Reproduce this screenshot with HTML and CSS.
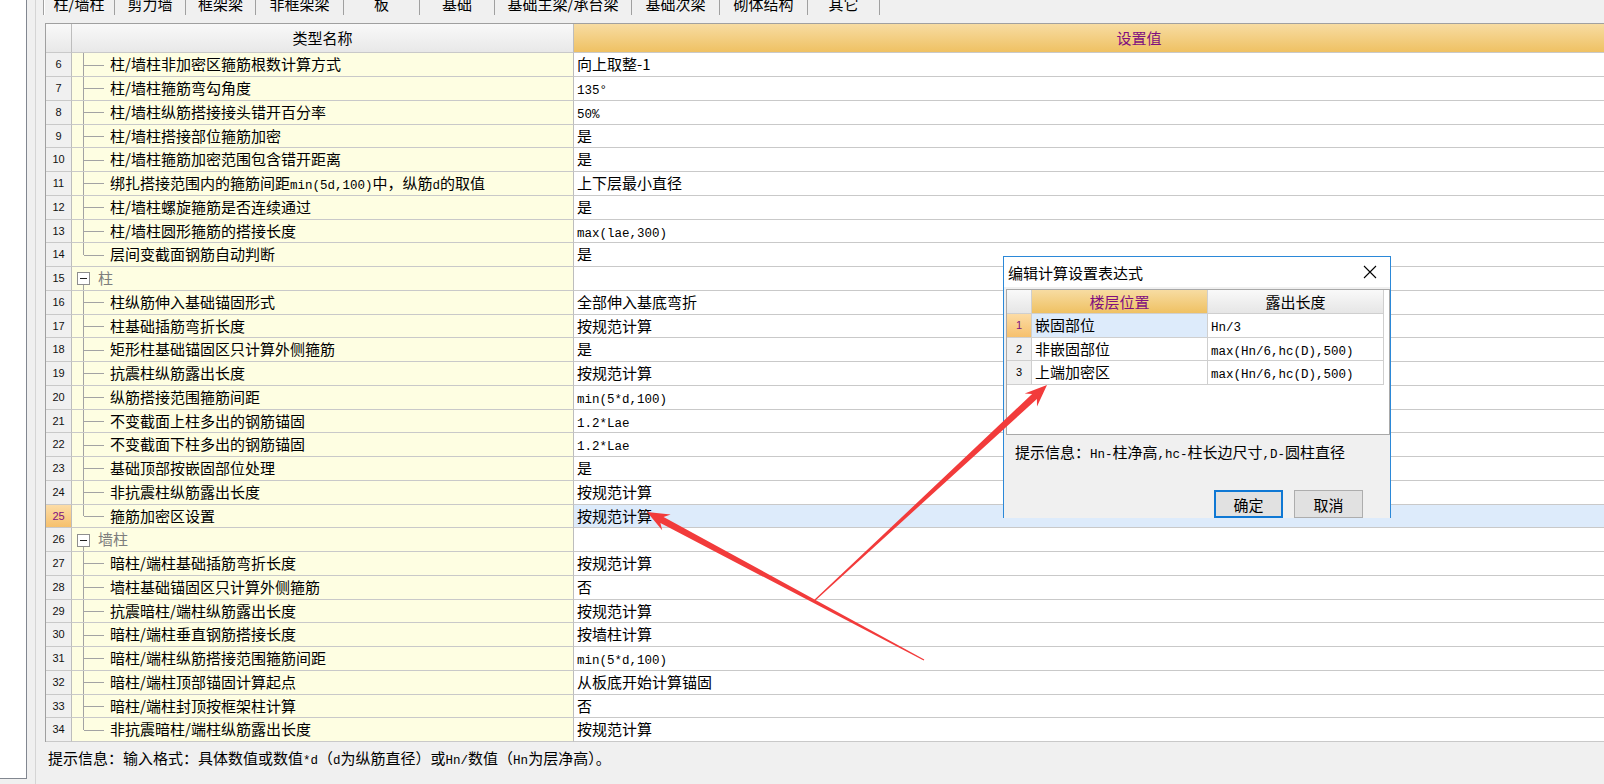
FILE: index.html
```html
<!DOCTYPE html>
<html lang="zh-CN">
<head>
<meta charset="utf-8">
<title>计算设置</title>
<link rel="stylesheet" href="styles.css">
</head>
<body>
<div class="app">
  <aside class="side"></aside>
  <main class="main">
    <nav class="tabs">
      <div class="tab active">柱/墙柱</div>
      <div class="tab">剪力墙</div>
      <div class="tab">框架梁</div>
      <div class="tab">非框架梁</div>
      <div class="tab">板</div>
      <div class="tab">基础</div>
      <div class="tab">基础主梁/承台梁</div>
      <div class="tab">基础次梁</div>
      <div class="tab">砌体结构</div>
      <div class="tab">其它</div>
    </nav>
    <div class="grid">
      <div class="row head"><div class="num"></div><div class="name">类型名称</div><div class="val">设置值</div></div>
      <div class="row"><div class="num">6</div><div class="name br">柱/墙柱非加密区箍筋根数计算方式</div><div class="val">向上取整-1</div></div>
      <div class="row"><div class="num">7</div><div class="name br">柱/墙柱箍筋弯勾角度</div><div class="val"><span class="m">135°</span></div></div>
      <div class="row"><div class="num">8</div><div class="name br">柱/墙柱纵筋搭接接头错开百分率</div><div class="val"><span class="m">50%</span></div></div>
      <div class="row"><div class="num">9</div><div class="name br">柱/墙柱搭接部位箍筋加密</div><div class="val">是</div></div>
      <div class="row"><div class="num">10</div><div class="name br">柱/墙柱箍筋加密范围包含错开距离</div><div class="val">是</div></div>
      <div class="row"><div class="num">11</div><div class="name br">绑扎搭接范围内的箍筋间距<span class="m">min(5d,100)</span>中，纵筋<span class="m">d</span>的取值</div><div class="val">上下层最小直径</div></div>
      <div class="row"><div class="num">12</div><div class="name br">柱/墙柱螺旋箍筋是否连续通过</div><div class="val">是</div></div>
      <div class="row"><div class="num">13</div><div class="name br">柱/墙柱圆形箍筋的搭接长度</div><div class="val"><span class="m">max(lae,300)</span></div></div>
      <div class="row"><div class="num">14</div><div class="name br last">层间变截面钢筋自动判断</div><div class="val">是</div></div>
      <div class="row"><div class="num">15</div><div class="name grp"><span class="pm"></span>柱</div><div class="val"></div></div>
      <div class="row"><div class="num">16</div><div class="name br">柱纵筋伸入基础锚固形式</div><div class="val">全部伸入基底弯折</div></div>
      <div class="row"><div class="num">17</div><div class="name br">柱基础插筋弯折长度</div><div class="val">按规范计算</div></div>
      <div class="row"><div class="num">18</div><div class="name br">矩形柱基础锚固区只计算外侧箍筋</div><div class="val">是</div></div>
      <div class="row"><div class="num">19</div><div class="name br">抗震柱纵筋露出长度</div><div class="val">按规范计算</div></div>
      <div class="row"><div class="num">20</div><div class="name br">纵筋搭接范围箍筋间距</div><div class="val"><span class="m">min(5*d,100)</span></div></div>
      <div class="row"><div class="num">21</div><div class="name br">不变截面上柱多出的钢筋锚固</div><div class="val"><span class="m">1.2*Lae</span></div></div>
      <div class="row"><div class="num">22</div><div class="name br">不变截面下柱多出的钢筋锚固</div><div class="val"><span class="m">1.2*Lae</span></div></div>
      <div class="row"><div class="num">23</div><div class="name br">基础顶部按嵌固部位处理</div><div class="val">是</div></div>
      <div class="row"><div class="num">24</div><div class="name br">非抗震柱纵筋露出长度</div><div class="val">按规范计算</div></div>
      <div class="row sel"><div class="num">25</div><div class="name br last">箍筋加密区设置</div><div class="val">按规范计算</div></div>
      <div class="row"><div class="num">26</div><div class="name grp"><span class="pm"></span>墙柱</div><div class="val"></div></div>
      <div class="row"><div class="num">27</div><div class="name br">暗柱/端柱基础插筋弯折长度</div><div class="val">按规范计算</div></div>
      <div class="row"><div class="num">28</div><div class="name br">墙柱基础锚固区只计算外侧箍筋</div><div class="val">否</div></div>
      <div class="row"><div class="num">29</div><div class="name br">抗震暗柱/端柱纵筋露出长度</div><div class="val">按规范计算</div></div>
      <div class="row"><div class="num">30</div><div class="name br">暗柱/端柱垂直钢筋搭接长度</div><div class="val">按墙柱计算</div></div>
      <div class="row"><div class="num">31</div><div class="name br">暗柱/端柱纵筋搭接范围箍筋间距</div><div class="val"><span class="m">min(5*d,100)</span></div></div>
      <div class="row"><div class="num">32</div><div class="name br">暗柱/端柱顶部锚固计算起点</div><div class="val">从板底开始计算锚固</div></div>
      <div class="row"><div class="num">33</div><div class="name br">暗柱/端柱封顶按框架柱计算</div><div class="val">否</div></div>
      <div class="row"><div class="num">34</div><div class="name br last">非抗震暗柱/端柱纵筋露出长度</div><div class="val">按规范计算</div></div>
    </div>
    <div class="status">提示信息：输入格式：具体数值或数值<span class="m">*d</span>（<span class="m">d</span>为纵筋直径）或<span class="m">Hn/</span>数值（<span class="m">Hn</span>为层净高）。</div>
  </main>
</div>

<section class="dlg">
  <header class="dlg-title">
    <span>编辑计算设置表达式</span>
    <span class="close"><svg width="14" height="14" viewBox="0 0 14 14"><path d="M1 1 L13 13 M13 1 L1 13" stroke="#000" stroke-width="1.1" fill="none"/></svg></span>
  </header>
  <div class="dlg-grid">
    <div class="dt-row dt-head"><div class="dn"></div><div class="dc hl">楼层位置</div><div class="dc">露出长度</div></div>
    <div class="dt-row cur"><div class="dn">1</div><div class="dc cell-sel">嵌固部位</div><div class="dc"><span class="m">Hn/3</span></div></div>
    <div class="dt-row"><div class="dn">2</div><div class="dc">非嵌固部位</div><div class="dc"><span class="m">max(Hn/6,hc(D),500)</span></div></div>
    <div class="dt-row"><div class="dn">3</div><div class="dc">上端加密区</div><div class="dc"><span class="m">max(Hn/6,hc(D),500)</span></div></div>
  </div>
  <div class="dlg-hint">提示信息：<span class="m">Hn-</span>柱净高<span class="m">,hc-</span>柱长边尺寸<span class="m">,D-</span>圆柱直径</div>
  <div class="dlg-btns">
    <button class="btn primary">确定</button>
    <button class="btn">取消</button>
  </div>
</section>

<svg class="arrows" width="1604" height="784" viewBox="0 0 1604 784">
  <polygon fill="#f23b3b" points="647,512 662.2,530.3 660.4,523.1 923.7,660.5 924.3,659.5 663.6,516.9 670.6,514.5"/>
  <polygon fill="#f23b3b" points="1047,385 1024.7,393.4 1032.1,394 814.6,599.6 815.4,600.4 1036.9,399.1 1037,406.6"/>
</svg>
</body>
</html>
```

FILE: styles.css
```css
* { box-sizing: border-box; }
html, body { margin: 0; padding: 0; }
body {
  width: 1604px;
  height: 784px;
  overflow: hidden;
  position: relative;
  background: #f0f0f0;
  font-family: "Noto Sans CJK SC", "Noto Sans", sans-serif;
  font-size: 15px;
  color: #000;
}

.m { font-family: "Liberation Mono", "Noto Sans CJK SC", monospace; font-size: 12.5px; }

.app { display: flex; height: 784px; }

.side {
  width: 27px;
  height: 779px;
  flex-shrink: 0;
  background: #fff;
  border-right: 1px solid #828790;
  border-bottom: 1px solid #828790;
}

.main {
  margin-left: 8px;
  border-left: 1px solid #d5d5d5;
  flex: 1;
  min-width: 0;
  overflow: hidden;
  display: flex;
  flex-direction: column;
  align-items: flex-start;
}

/* tabs */
.tabs {
  display: grid;
  grid-template-columns: 72px 71px 70px 88px 76px 75px 137px 88px 88px 72px;
  margin-top: -6px;
  margin-left: 7px;
  height: 21px;
}
.tab {
  border-right: 1px solid #a0a0a0;
  text-align: center;
  line-height: 20px;
  white-space: nowrap;
}
.tab.active {
  border-left: 1px solid #a0a0a0;
  box-shadow: inset 1px 0 0 #fff;
}

/* main grid */
.grid {
  margin-top: 8px;
  margin-left: 9px;
  width: 1659px;
  flex-shrink: 0;
  border-top: 1px solid #a0a0a0;
  border-left: 1px solid #a0a0a0;
  background: #fff;
}
.row {
  display: grid;
  grid-template-columns: 26px 502px 1fr;
  height: 23.75px;
}
.row > div {
  border-bottom: 1px solid #c9c9c9;
  line-height: 22.75px;
  white-space: nowrap;
  overflow: hidden;
}
.row.head { height: 29.25px; }
.row.head > div { line-height: 28.25px; }

.num {
  background: #f0f0f0;
  border-right: 1px solid #bdbdbd;
  text-align: center;
  font-family: "Liberation Sans", sans-serif;
  font-size: 11px;
  color: #111;
}
.name {
  background: #fefee2;
  border-right: 1px solid #bdbdbd;
  position: relative;
  padding-left: 38px;
}
.val { padding-left: 3px; background: #fff; }

.head .num, .head .name {
  background: linear-gradient(#f9f9f9, #e8e8e8);
}
.head .name { text-align: center; padding-left: 0; }
.head .val {
  background: linear-gradient(#f7dca2, #efc163);
  color: #7f0f7f;
  text-align: center;
  padding-left: 0;
}

.sel .num {
  background: linear-gradient(#fcdca6, #f6c06c);
  color: #7f0f7f;
}
.sel .val { background: #ddebfb; }

/* tree lines */
.name.br::before {
  content: "";
  position: absolute;
  left: 11px;
  top: 0;
  bottom: 0;
  border-left: 1px solid #a3a3a3;
}
.name.br.last::before { bottom: 50%; }
.name.br::after {
  content: "";
  position: absolute;
  left: 12px;
  width: 20px;
  top: 50%;
  border-top: 1px solid #a3a3a3;
}
.name.grp { padding-left: 5px; color: #7d7d7d; }
.name.grp::before {
  content: "";
  position: absolute;
  left: 11px;
  top: calc(50% + 6px);
  bottom: 0;
  border-left: 1px solid #a3a3a3;
}
.pm {
  display: inline-block;
  vertical-align: middle;
  width: 13px;
  height: 13px;
  border: 1px solid #8e8e8e;
  background: #fff;
  margin: -2px 8px 0 0;
  position: relative;
}
.pm::after {
  content: "";
  position: absolute;
  left: 2px;
  right: 2px;
  top: 5px;
  height: 1px;
  background: #222;
}

.status {
  margin-left: 12px;
  margin-top: 6px;
  line-height: 20px;
  white-space: nowrap;
}

/* dialog */
.dlg {
  position: absolute;
  left: 1003px;
  top: 256px;
  width: 388px;
  height: 262px;
  border: 1px solid #2b88d8;
  border-bottom: none;
  background: #f0f0f0;
  overflow: hidden;
}
.dlg-title {
  height: 30px;
  background: #fff;
  display: flex;
  align-items: center;
  justify-content: space-between;
  padding-left: 4px;
}
.close {
  width: 40px;
  height: 30px;
  display: flex;
  align-items: center;
  justify-content: center;
}
.dlg-grid {
  margin: 2px 0 0 2px;
  height: 146px;
  background: #fff;
  border: 1px solid #a9a9a9;
}
.dt-row {
  display: grid;
  grid-template-columns: 25px 176px 176px;
  height: 23.6px;
}
.dt-row.dt-head { height: 24px; }
.dt-row > div {
  border-right: 1px solid #cfcfcf;
  border-bottom: 1px solid #cfcfcf;
  line-height: 22.6px;
  white-space: nowrap;
  overflow: hidden;
}
.dt-head > div { line-height: 23px; }
.dn {
  background: #f0f0f0;
  text-align: center;
  font-family: "Liberation Sans", sans-serif;
  font-size: 11px;
}
.dc { padding-left: 3px; }
.dt-head > div {
  background: linear-gradient(#f9f9f9, #e6e6e6);
  text-align: center;
  padding-left: 0;
}
.dt-head > .hl {
  background: linear-gradient(#f7dca2, #efc163);
  color: #7f0f7f;
}
.cur .dn {
  background: linear-gradient(#fcdca6, #f6c06c);
  color: #7f0f7f;
}
.cell-sel { background: #ddebfb; }

.dlg-hint {
  padding-left: 11px;
  margin-top: 7px;
  line-height: 20px;
  white-space: nowrap;
}
.dlg-btns {
  display: flex;
  justify-content: flex-end;
  gap: 11px;
  padding-right: 27px;
  margin-top: 25px;
}
.btn {
  width: 69px;
  height: 28px;
  background: #e1e1e1;
  border: 1px solid #adadad;
  font-family: "Noto Sans CJK SC", sans-serif;
  font-size: 15px;
  color: #000;
  padding: 0;
  margin: 0;
}
.btn.primary { border: 2px solid #0f78d4; }

.arrows {
  position: absolute;
  left: 0;
  top: 0;
  pointer-events: none;
  z-index: 10;
}
```
